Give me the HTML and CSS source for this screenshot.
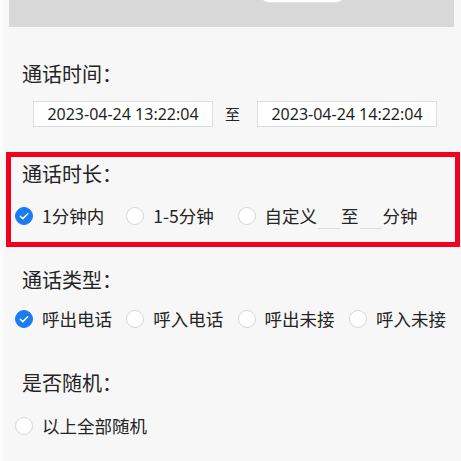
FILE: index.html
```html
<!DOCTYPE html>
<html lang="zh-CN">
<head>
<meta charset="utf-8">
<link rel="stylesheet" href="styles.css">
</head>
<body>
<div class="page">
  <div class="header"><div class="pill"></div></div>

  <div class="section first">
    <div class="title">通话时间：</div>
    <div class="date-row">
      <div class="date-input">2023-04-24 13:22:04</div>
      <span class="to">至</span>
      <div class="date-input">2023-04-24 14:22:04</div>
    </div>
  </div>

  <div class="section boxed">
    <div class="title">通话时长：</div>
    <div class="options">
      <div class="opt"><span class="radio checked"><svg viewBox="0 0 18 18" width="18" height="18"><path d="M5.3 9.2l2.5 2.4 4.9-4.9" fill="none" stroke="#fff" stroke-width="1.5" stroke-linecap="round" stroke-linejoin="round"/></svg></span><span class="label">1分钟内</span></div>
      <div class="opt"><span class="radio"></span><span class="label">1-5分钟</span></div>
      <div class="opt custom"><span class="radio"></span><span class="label">自定义</span><span class="blank"></span><span class="label">至</span><span class="blank"></span><span class="label">分钟</span></div>
    </div>
  </div>

  <div class="section type">
    <div class="title">通话类型：</div>
    <div class="options">
      <div class="opt"><span class="radio checked"><svg viewBox="0 0 18 18" width="18" height="18"><path d="M5.3 9.2l2.5 2.4 4.9-4.9" fill="none" stroke="#fff" stroke-width="1.5" stroke-linecap="round" stroke-linejoin="round"/></svg></span><span class="label">呼出电话</span></div>
      <div class="opt"><span class="radio"></span><span class="label">呼入电话</span></div>
      <div class="opt"><span class="radio"></span><span class="label">呼出未接</span></div>
      <div class="opt"><span class="radio"></span><span class="label">呼入未接</span></div>
    </div>
  </div>

  <div class="section random">
    <div class="title">是否随机：</div>
    <div class="options">
      <div class="opt wide"><span class="radio"></span><span class="label">以上全部随机</span></div>
    </div>
  </div>
</div>
</body>
</html>
```

FILE: styles.css
```css
* { box-sizing: border-box; }
html, body {
  margin: 0;
  padding: 0;
  background: #f7f7f7;
}
body {
  font-family: "Noto Sans CJK SC", "Noto Sans", sans-serif;
  color: #242424;
  width: 461px;
  height: 461px;
  overflow: hidden;
}
.page {
  border-left: 3px solid #fbfbfb;
  min-height: 461px;
}
.header {
  margin: 0 7px 0 6px;
  height: 27px;
  background: #d8d8d8;
  overflow: hidden;
}
.pill {
  margin-left: 249px;
  margin-top: -20px;
  width: 89px;
  height: 23px;
  background: #fff;
  border: 1px solid #e3e3e3;
  border-radius: 12px;
}
.section {
  padding-left: 19px;
}
.title {
  font-size: 20px;
  line-height: 24px;
  height: 24px;
}
.first { padding-top: 35px; }
.date-row {
  display: flex;
  align-items: center;
  margin-top: 15px;
  padding-left: 11px;
}
.date-input {
  width: 180px;
  height: 26px;
  background: #fff;
  border: 1px solid #dcdcdc;
  font-family: "Noto Sans", sans-serif;
  font-size: 16px;
  line-height: 24px;
  text-align: center;
  color: #1f1f1f;
}
.to {
  font-size: 15px;
  margin: 0 17px 0 12px;
  line-height: 24px;
}
.boxed {
  margin: 25px 0 0 3px;
  width: 454px;
  border: 5px solid #f4001f;
  height: 95px;
  padding: 5px 0 0 11px;
}
.options {
  display: grid;
  grid-template-columns: repeat(4, 111.3px);
  margin-left: -7px;
  margin-top: 15px;
}
.boxed .options { margin-top: 18px; }
.opt {
  display: flex;
  align-items: center;
  height: 24px;
  white-space: nowrap;
}
.opt.custom { grid-column: span 2; }
.opt.wide { grid-column: span 4; }
.radio {
  width: 18px;
  height: 18px;
  border-radius: 50%;
  background: #fff;
  border: 1px solid #d6d6d6;
  flex: none;
  display: block;
  margin-right: 9px;
}
.radio svg { display: block; margin: -1px; }
.radio.checked {
  background: #1a7cf2;
  border-color: #1a7cf2;
}
.label {
  font-size: 17.5px;
  line-height: 24px;
}
.blank {
  width: 22px;
  height: 25px;
  border-bottom: 1px solid #dcdcdc;
  margin: 0 1px;
  align-self: flex-start;
}
.type { padding-top: 21px; }
.random { padding-top: 40px; }
.type .options { margin-top: 15px; }
.random .options { margin-top: 19px; }
```
